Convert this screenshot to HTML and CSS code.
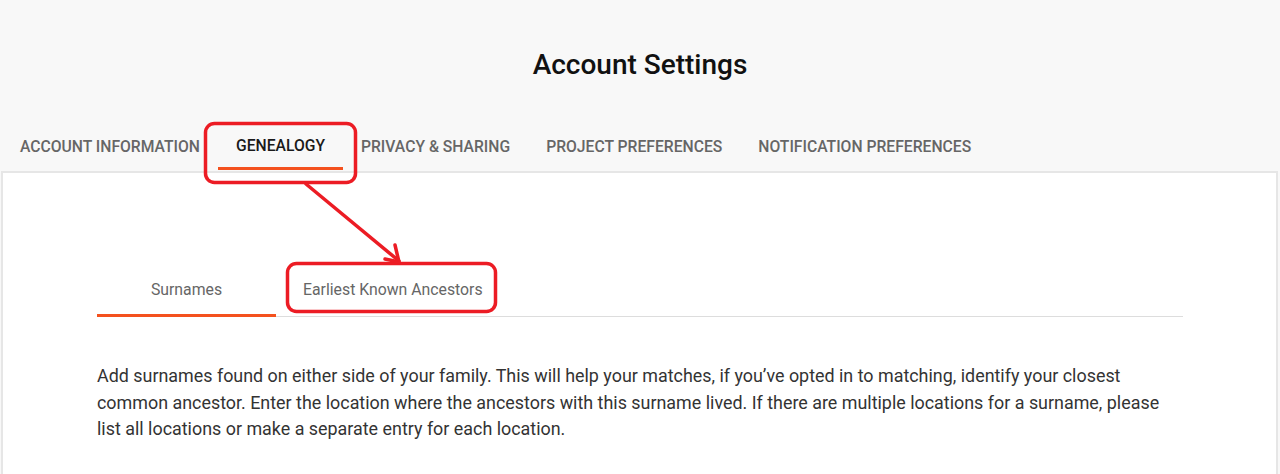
FILE: index.html
```html
<!DOCTYPE html>
<html lang="en">
<head>
<meta charset="utf-8">
<title>Account Settings</title>
<link rel="stylesheet" href="styles.css">
</head>
<body>
<div class="page">
  <header class="header">
    <h1 class="title">Account Settings</h1>
  </header>
  <nav class="tabs">
    <a class="tab">Account Information</a>
    <a class="tab tab-active">Genealogy</a>
    <a class="tab">Privacy &amp; Sharing</a>
    <a class="tab">Project Preferences</a>
    <a class="tab">Notification Preferences</a>
  </nav>
  <section class="panel">
    <div class="panel-inner">
      <div class="subtabs">
        <a class="subtab subtab-active">Surnames</a>
        <a class="subtab">Earliest Known Ancestors</a>
      </div>
      <p class="intro">Add surnames found on either side of your family. This will help your matches, if you’ve opted in to matching, identify your closest common ancestor. Enter the location where the ancestors with this surname lived. If there are multiple locations for a surname, please list all locations or make a separate entry for each location.</p>
    </div>
  </section>
  <svg class="annotations" width="1280" height="474" viewBox="0 0 1280 474" aria-hidden="true">
    <rect x="205.5" y="123.5" width="150" height="59" rx="9" fill="none" stroke="#ec1c24" stroke-width="3.5"/>
    <rect x="287.5" y="263.5" width="208" height="48" rx="9" fill="none" stroke="#ec1c24" stroke-width="3.5"/>
    <line x1="306" y1="184" x2="399" y2="261" stroke="#ec1c24" stroke-width="3.5" stroke-linecap="round"/>
    <polyline points="385,259 399,262 395,245" fill="none" stroke="#ec1c24" stroke-width="3.5" stroke-linecap="round" stroke-linejoin="round"/>
  </svg>
</div>
</body>
</html>
```
FILE: styles.css
```css
* { box-sizing: border-box; }
html, body { margin: 0; padding: 0; }
body {
  background: #f8f8f8;
  font-family: Roboto, "Liberation Sans", Arial, sans-serif;
  color: #222;
  height: 474px;
  overflow: hidden;
}
.page { position: relative; width: 1280px; }
.header {
  height: 120px;
  display: flex;
  justify-content: center;
  padding-top: 46px;
}
.title {
  margin: 0;
  font-size: 28px;
  font-weight: 500;
  line-height: 38px;
  color: #111;
}
.tabs {
  display: flex;
  padding-left: 2px;
  height: 51px;
}
.tab {
  display: flex;
  align-items: center;
  padding: 4px 18px 0;
  font-size: 15.7px;
  font-weight: 500;
  text-transform: uppercase;
  color: #666;
  border-bottom: 3px solid transparent;
}
.tab-active {
  color: #1a1a1a;
  border-bottom-color: #f4511e;
  height: 50px;
}
.panel {
  margin: 0 2px 0 1px;
  background: #fff;
  border: 2px solid #e6e6e6;
  border-bottom: none;
  height: 303px;
}
.panel-inner {
  width: 1086px;
  margin-left: 94px;
  padding-top: 91px;
}
.subtabs {
  display: flex;
  border-bottom: 1px solid #ddd;
}
.subtab {
  width: 179px;
  height: 53px;
  display: flex;
  align-items: center;
  justify-content: center;
  font-size: 15.8px;
  color: #666;
  border-bottom: 3px solid transparent;
  margin-bottom: -1px;
}
.subtab + .subtab { width: auto; padding: 0 24px 0 27px; }
.subtab-active { border-bottom-color: #f4511e; }
.intro {
  margin: 46px 0 0;
  font-size: 17.9px;
  line-height: 26.5px;
  color: #333;
}
.annotations {
  position: absolute;
  left: 0;
  top: 0;
  pointer-events: none;
}
```
